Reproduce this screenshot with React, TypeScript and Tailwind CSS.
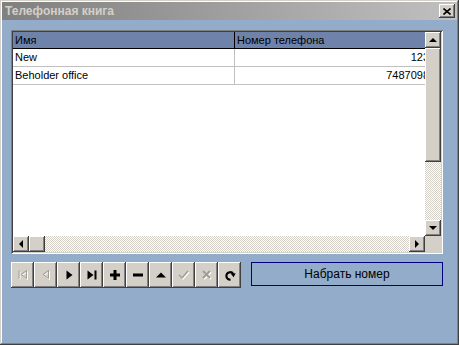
import React from "react";

const bevel =
  "bg-[#d4d0c8] shadow-[inset_-1px_-1px_#404040,inset_1px_1px_#ffffff,inset_-2px_-2px_#808080,inset_2px_2px_#d4d0c8]";
const track =
  "bg-[repeating-conic-gradient(#d4d0c8_0%_25%,#ffffff_0%_50%)] bg-[length:2px_2px]";

function Tri({ dir, size = 4 }: { dir: "up" | "down" | "left" | "right"; size?: number }) {
  const pts: Record<string, string> = {
    up: `0,${size} ${size * 2},${size} ${size},0`,
    down: `0,0 ${size * 2},0 ${size},${size}`,
    left: `${size},0 ${size},${size * 2} 0,${size}`,
    right: `0,0 0,${size * 2} ${size},${size}`,
  };
  const vertical = dir === "up" || dir === "down";
  return (
    <svg width={vertical ? size * 2 : size} height={vertical ? size : size * 2}>
      <polygon points={pts[dir]} fill="#000" />
    </svg>
  );
}

function ScrollBtn({ dir }: { dir: "up" | "down" | "left" | "right" }) {
  return (
    <div className={`flex h-[16px] w-[16px] shrink-0 items-center justify-center ${bevel}`}>
      <Tri dir={dir} />
    </div>
  );
}

// navigator glyphs, 12x12 each
function NavIcon({ kind }: { kind: string }) {
  const off = "#a09c94";
  switch (kind) {
    case "first":
      return (
        <svg width="12" height="12" viewBox="0 0 12 12">
          <g transform="translate(1,1)">
            <path d="M2 1.5V9.5M9.5 1.5L4 5.5L9.5 9.5Z" stroke="#fff" fill="none" />
          </g>
          <path d="M2 1.5V9.5M9.5 1.5L4 5.5L9.5 9.5Z" stroke={off} fill="none" />
        </svg>
      );
    case "prior":
      return (
        <svg width="12" height="12" viewBox="0 0 12 12">
          <g transform="translate(1,1)">
            <path d="M8.5 1.5L3 5.5L8.5 9.5Z" stroke="#fff" fill="none" />
          </g>
          <path d="M8.5 1.5L3 5.5L8.5 9.5Z" stroke={off} fill="none" />
        </svg>
      );
    case "next":
      return (
        <svg width="12" height="12" viewBox="0 0 12 12">
          <path d="M3.5 1.5L9.5 6L3.5 10.5Z" fill="#000" />
        </svg>
      );
    case "last":
      return (
        <svg width="12" height="12" viewBox="0 0 12 12">
          <path d="M1.5 1.5L7.5 6L1.5 10.5Z" fill="#000" />
          <rect x="8.5" y="1.5" width="2" height="9" fill="#000" />
        </svg>
      );
    case "insert":
      return (
        <svg width="12" height="12" viewBox="0 0 12 12">
          <rect x="1" y="4.5" width="10" height="3" fill="#000" />
          <rect x="4.5" y="1" width="3" height="10" fill="#000" />
        </svg>
      );
    case "delete":
      return (
        <svg width="12" height="12" viewBox="0 0 12 12">
          <rect x="1" y="4.5" width="10" height="3" fill="#000" />
        </svg>
      );
    case "edit":
      return (
        <svg width="12" height="12" viewBox="0 0 12 12">
          <path d="M1 8.5L6 3.5L11 8.5Z" fill="#000" />
        </svg>
      );
    case "post":
      return (
        <svg width="12" height="12" viewBox="0 0 12 12">
          <g transform="translate(1,1)">
            <path d="M1 6L4 9L10 2" stroke="#fff" fill="none" strokeWidth="1.5" />
          </g>
          <path d="M1 6L4 9L10 2" stroke={off} fill="none" strokeWidth="1.5" />
        </svg>
      );
    case "cancel":
      return (
        <svg width="12" height="12" viewBox="0 0 12 12">
          <g transform="translate(1,1)">
            <path d="M2 2L9 9M9 2L2 9" stroke="#fff" fill="none" strokeWidth="2" />
          </g>
          <path d="M2 2L9 9M9 2L2 9" stroke={off} fill="none" strokeWidth="2" />
        </svg>
      );
    default:
      // refresh: clockwise curl with arrowhead at the right
      return (
        <svg width="12" height="12" viewBox="0 0 12 12">
          <path d="M6.5 10.5A3.6 3.6 0 0 1 5.5 3.3A3.6 3.6 0 0 1 9.2 4.8" stroke="#000" fill="none" strokeWidth="2.2" />
          <path d="M6.6 4.6L11.6 4.2L9.6 8.2Z" fill="#000" />
        </svg>
      );
  }
}

const rows = [
  { name: "New", phone: "123" },
  { name: "Beholder office", phone: "7487098" },
];

const navKinds = ["first", "prior", "next", "last", "insert", "delete", "edit", "post", "cancel", "refresh"];

export default function App() {
  return (
    <div
      className="flex h-[345px] w-[459px] flex-col bg-[#d4d0c8] p-[2px] text-[11px] text-black shadow-[inset_-1px_-1px_#404040,inset_1px_1px_#d4d0c8,inset_-2px_-2px_#808080,inset_2px_2px_#ffffff]"
      style={{ fontFamily: '"Liberation Sans", Arial, sans-serif' }}
    >
      {/* Title bar */}
      <div className="flex h-[18px] shrink-0 items-center justify-between bg-gradient-to-r from-[#808080] to-[#c0c0c0] pl-[3px] pr-[2px]">
        <span className="text-[12px] font-bold text-[#d4d0c8]">Телефонная книга</span>
        <div className={`flex h-[14px] w-[16px] items-center justify-center ${bevel}`}>
          <svg width="8" height="7" viewBox="0 0 8 7">
            <path d="M0.5 0.5L7.5 6.5M7.5 0.5L0.5 6.5" stroke="#000" strokeWidth="1.6" />
          </svg>
        </div>
      </div>

      {/* Body */}
      <div className="flex flex-1 flex-col bg-[#93acc9] pl-[9px] pr-[12px] pt-[10px]">
        {/* Grid */}
        <div className="flex h-[224px] w-[432px] flex-col bg-white p-[2px] shadow-[inset_1px_1px_#808080,inset_-1px_-1px_#ffffff,inset_2px_2px_#404040,inset_-2px_-2px_#d4d0c8]">
          <div className="flex min-h-0 flex-1">
            <div className="flex w-[412px] flex-col overflow-hidden">
              <div className="flex h-[17px] shrink-0 border-b border-black bg-[#6f82a9]">
                <div className="w-[222px] shrink-0 border-r border-black pl-[2px] leading-[16px]">Имя</div>
                <div className="w-[230px] shrink-0 pl-[2px] leading-[16px]">Номер телефона</div>
              </div>
              {rows.map((r) => (
                <div key={r.name} className="flex h-[18px] shrink-0 border-b border-[#c0c0c0]">
                  <div className="w-[222px] shrink-0 border-r border-[#c0c0c0] pl-[2px] leading-[17px]">{r.name}</div>
                  <div className="w-[196px] shrink-0 pr-[2px] text-right leading-[17px]">{r.phone}</div>
                </div>
              ))}
            </div>
            {/* Vertical scrollbar */}
            <div className="flex w-[16px] flex-col">
              <ScrollBtn dir="up" />
              <div className={`h-[114px] shrink-0 ${bevel}`} />
              <div className={`flex-1 ${track}`} />
              <ScrollBtn dir="down" />
            </div>
          </div>
          {/* Horizontal scrollbar */}
          <div className="flex h-[16px] shrink-0">
            <ScrollBtn dir="left" />
            <div className={`w-[16px] shrink-0 ${bevel}`} />
            <div className={`flex-1 ${track}`} />
            <ScrollBtn dir="right" />
            <div className="w-[16px] shrink-0 bg-[#d4d0c8]" />
          </div>
        </div>

        {/* Navigator + dial button */}
        <div className="mt-[8px] flex items-start">
          <div className="flex">
            {navKinds.map((k) => (
              <div key={k} className={`flex h-[26px] w-[23px] items-center justify-center ${bevel}`}>
                <NavIcon kind={k} />
              </div>
            ))}
          </div>
          <div className="ml-[10px] flex h-[24px] w-[192px] items-center justify-center border border-[#000080] text-[12px]">
            Набрать номер
          </div>
        </div>
      </div>
    </div>
  );
}
